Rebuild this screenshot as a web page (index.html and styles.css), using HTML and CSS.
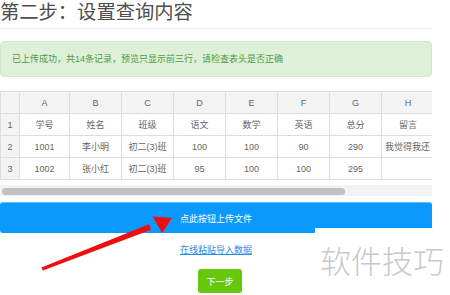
FILE: index.html
```html
<!doctype html>
<html lang="zh-CN">
<head>
  <meta charset="UTF-8" />
  <meta name="viewport" content="width=device-width, initial-scale=1" />
  <title>设置查询内容</title>
  <link rel="stylesheet" href="styles.css">
</head>
<body>
  <div class="page">
    <h2 class="step-title">第二步：设置查询内容</h2>

    <div class="alert">已上传成功，共14条记录，预览只显示前三行，请检查表头是否正确</div>

    <div class="preview">
      <table class="sheet">
        <tr class="letters">
          <th class="idx"></th>
          <th class="col-a">A</th><th>B</th><th>C</th><th>D</th><th>E</th><th>F</th><th>G</th><th class="col-h">H</th>
        </tr>
        <tr>
          <th class="idx">1</th>
          <td>学号</td><td>姓名</td><td>班级</td><td>语文</td><td>数学</td><td>英语</td><td>总分</td><td>留言</td>
        </tr>
        <tr>
          <th class="idx">2</th>
          <td>1001</td><td>李小明</td><td>初二(3)班</td><td>100</td><td>100</td><td>90</td><td>290</td><td class="clip">我觉得我还</td>
        </tr>
        <tr>
          <th class="idx">3</th>
          <td>1002</td><td>张小红</td><td>初二(3)班</td><td>95</td><td>100</td><td>100</td><td>295</td><td></td>
        </tr>
      </table>
    </div>
    <div class="scroll-track"><div class="scroll-thumb"></div></div>

    <button class="upload-btn">点此按钮上传文件</button>
    <a class="paste-link" href="#">在线粘贴导入数据</a>
    <button class="next-btn">下一步</button>
  </div>

  <svg class="arrow" width="450" height="295" viewBox="0 0 450 295">
    <polygon fill="#f20d0d" points="41.4,267.4 149,224.3 151,229.8 42.8,270.6" />
    <polygon fill="#f20d0d" points="172,218 152.5,216.5 162,233" />
  </svg>

  <div class="watermark">软件技巧</div>
</body>
</html>
```

FILE: styles.css
```css
body {
  margin: 0;
  background: #fff;
  font-family: "Liberation Sans", "Noto Sans CJK SC", sans-serif;
  color: #666;
  overflow: hidden;
}
.page {
  width: 432px;
  display: flex;
  flex-direction: column;
  align-items: center;
}
.step-title {
  align-self: stretch;
  margin: 0;
  padding-bottom: 3px;
  border-bottom: 1px solid #eee;
  font-size: 19.3px;
  line-height: 25px;
  font-weight: normal;
  color: #4d4d4d;
}
.alert {
  align-self: stretch;
  margin-top: 12px;
  padding: 0 11px;
  height: 34px;
  line-height: 34px;
  background: #dff0d8;
  border: 1px solid #d6e9c6;
  border-radius: 4px;
  color: #4f9a45;
  font-size: 9px;
}
.preview {
  align-self: stretch;
  margin-top: 14px;
  overflow: hidden;
}
.sheet {
  border-collapse: collapse;
  table-layout: fixed;
  width: 433px;
  font-size: 9px;
}
.sheet th,
.sheet td {
  width: 51px;
  height: 21px;
  padding: 0;
  border: 1px solid #ddd;
  text-align: center;
  font-weight: normal;
  color: #666;
  white-space: nowrap;
  overflow: hidden;
}
.sheet .idx {
  width: 18px;
  background: #f3f3f3;
}
.sheet .col-a {
  width: 49px;
}
.sheet .col-h {
  width: 52px;
}
.letters th {
  background: #f3f3f3;
}
.sheet .clip {
  text-align: left;
  padding-left: 3px;
  text-overflow: clip;
}
.scroll-track {
  align-self: stretch;
  margin-top: 5px;
  height: 11px;
  background: #f3f3f3;
}
.scroll-thumb {
  width: 343px;
  height: 7px;
  margin: 3px 0 0 2px;
  background: #c1c1c1;
  border-radius: 4px;
}
.upload-btn {
  align-self: stretch;
  margin-top: 6px;
  height: 31px;
  border: 0;
  border-top: 1px solid #5cbcff;
  border-radius: 3px;
  background: #0a99ff;
  color: #fff;
  font-family: inherit;
  font-size: 9px;
}
.paste-link {
  margin-top: 10px;
  line-height: 14px;
  font-size: 9px;
  color: #2b8ae8;
  text-decoration: underline;
}
.next-btn {
  margin: 12px 0 0 8px;
  width: 44px;
  height: 24px;
  border: 0;
  border-radius: 3px;
  background: #67c70b;
  color: #fff;
  font-family: inherit;
  font-size: 9px;
}
.arrow {
  position: absolute;
  left: 0;
  top: 0;
  pointer-events: none;
}
.watermark {
  position: absolute;
  left: 315px;
  top: 228px;
  right: 0;
  bottom: 0;
  padding: 10px 0 0 5px;
  background: #fff;
  color: #c9c9c9;
  font-family: "Noto Sans CJK SC", sans-serif;
  font-size: 31px;
  font-weight: 300;
  line-height: 44px;
}
```
